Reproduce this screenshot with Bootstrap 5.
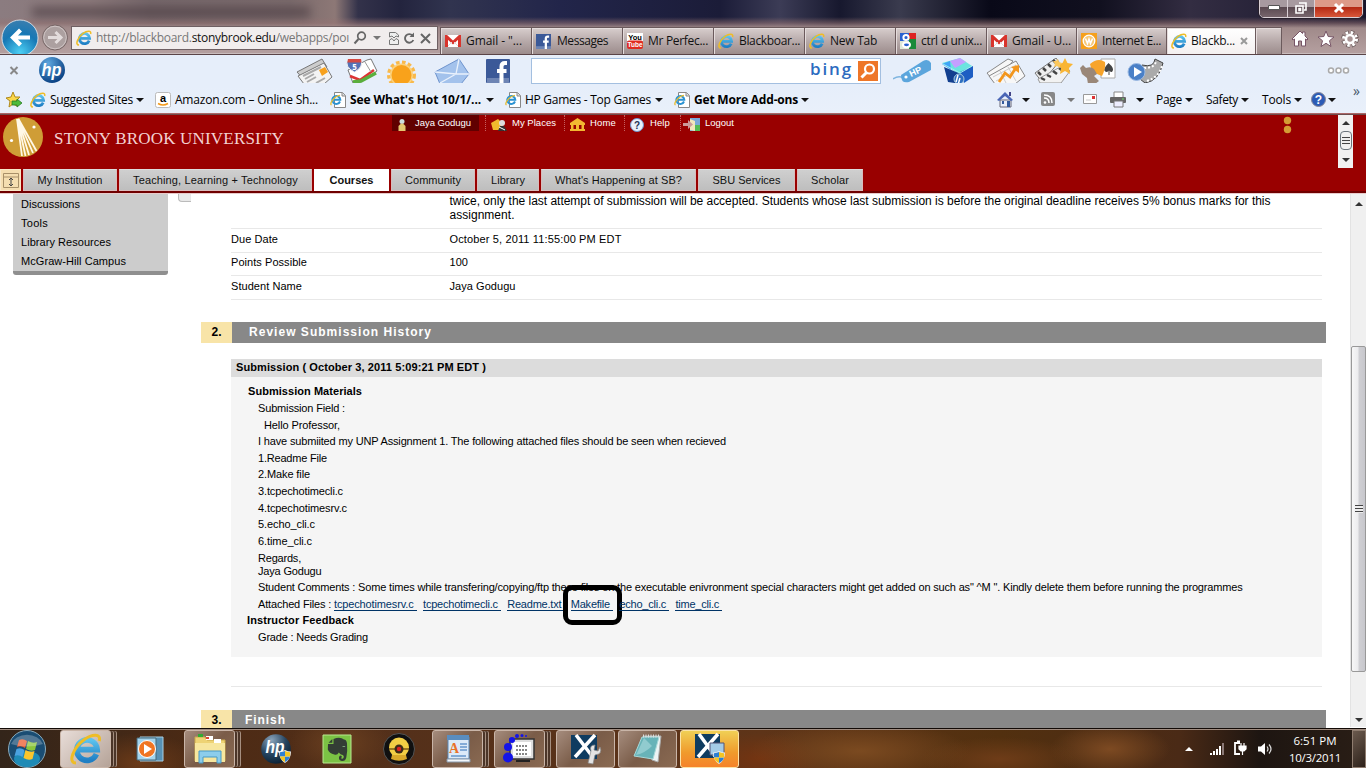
<!DOCTYPE html>
<html lang="en">
<head>
<meta charset="utf-8">
<title>Blackboard - Review Submission History</title>
<link href="https://cdn.jsdelivr.net/npm/bootstrap@5.3.0/dist/css/bootstrap.min.css" rel="stylesheet">
<style>
html,body{height:768px;overflow:hidden}
body{width:1366px;font:11px/1.2 "Liberation Sans",Arial,sans-serif;color:#000;background:#fff}
svg{display:block;overflow:visible}
.cells{display:grid;align-items:center;justify-items:start}
.ui{font-family:"Open Sans","Noto Sans",sans-serif;font-size:12px;white-space:nowrap;line-height:16px}
[data-w]{display:inline-block;white-space:pre}
/* window frame */
.frame{height:55px;position:relative;border-bottom:1px solid #5a4447;box-shadow:inset 0 -1px #c9bcbc;overflow:hidden;
 background:linear-gradient(180deg,transparent 17px,rgba(150,115,115,.55) 23px,#a08a8a 28px,#b5a0a0 54px),
 linear-gradient(90deg,#8b7c80 0,#8a787a 90px,#75666a 150px,#7a6a6c 290px,#8d7876 335px,#33324a 358px,#23243e 400px,#31344f 450px,#22254a 560px,#1b1c38 720px,#3c3c56 780px,#17182e 840px,#3a3b4e 900px,#090918 990px,#11101f 1100px,#332d42 1190px,#17152c 1366px)}
.smudge{position:absolute;height:10px;top:7px;background:#4b3c41;filter:blur(5px);opacity:.65}
.caption{position:absolute;right:3px;top:-3px;width:104px;height:21px;border:1px solid #d9cfd5;border-radius:0 0 5px 5px;overflow:hidden;box-shadow:0 0 0 1px #28202c;grid-template-columns:28px 27px 1fr}
.caption>div{width:100%;height:100%;display:flex;align-items:center;justify-content:center;background:linear-gradient(#a79aa0 45%,#5b4a52 50%,#77656c);border-right:1px solid #d9cfd5}
.caption>.shut{background:linear-gradient(#dd9a88 45%,#b52a14 50%,#d8573a);border:0}
.strip{height:54px;grid-template-columns:40px 31px 366px 3px 91px 91px 91px 91px 91px 91px 90px 90px 89px 27px 10px 26px 24px 20px;align-items:end;position:relative}
.addr{width:367px;height:24px;margin-bottom:4px;border:1px solid #6f6063;background:#f1eded;grid-template-columns:4px 20px 257px 20px 13px 17px 17px 1fr;color:#777}
.addr b{font-weight:400;color:#111}
.tabx{width:100%;height:27px;border:1px solid #6b5a5c;border-right:0;border-bottom:0;background:linear-gradient(#d8cecd,#b7aaaa 50%,#9c8c8c);grid-template-columns:4px 21px 1fr;box-shadow:inset 1px 1px #e5dcdc;color:#111}
.tabx.on{background:linear-gradient(#fff,#f4f0f0);grid-template-columns:4px 20px 49px 1fr}
/* toolbars */
.bar1{height:31px;background:#e6eefa;grid-template-columns:9px 29px 258px 49px 42px 47px 51px 46px 362px 47px 46px 48px 46px 47px 200px 1fr}
.bar1>svg{height:25px;align-self:start;margin-top:3px;overflow:hidden}
.find{width:350px;height:26px;background:#fff;border:1px solid #a3bfe0;display:flex;align-items:center;justify-content:flex-end;gap:5px;padding-right:2px}
.bing{font:600 17px/20px "Open Sans",sans-serif;color:#2c6bbf;margin-top:-3px}
.bar2{height:28px;background:linear-gradient(#e6eefa,#e9f0fa);border-bottom:1px solid #a66;grid-template-columns:6px 24px 20px 86px 19px 20px 155px 20px 136px 19px 20px 130px 19px 20px 107px 196px 25px 19px 26px 16px 27px 26px 20px 29px 21px 35px 21px 32px 17px 17px 25px 1fr}
.dn{width:0;height:0;border:4px solid transparent;border-top:4px solid #111;border-bottom:0}
.dn.dim{border-top-color:#777}
/* university banner */
.banner{height:80px;background:#900;border-top:1px solid #6e4c4c;border-bottom:1px solid #e8caca}
.top{height:54px;grid-template-columns:3px 51px 338px 87px 6px 79px 60px 56px 604px 55px 1fr;color:#fff;font-size:9.5px;align-items:start}
.top .lnk{display:flex;height:16px;line-height:15px;width:100%}
.top .lnk svg{margin:3px 0 0 5px}
.me{background:#610000}
.sep{border-left:1px dotted #c56060}
.uni{font:17px/20px "Liberation Serif",serif;color:#f3d2d2;margin-top:14px}
.mini{width:15px;height:53px;background:#f1f1f1}
.tabs{height:24px;border-bottom:2px solid #700000;grid-template-columns:21px 94px 193px 75px 84px 62px 155px 97px 66px;column-gap:2px}
.tabs>div{height:22px;width:100%;background:linear-gradient(#cfcfcf,#bebebe);border:1px solid #d9bcbc;border-top-color:#ddd;text-align:center;line-height:20px;color:#111}
.tabs>div.cur{background:#fff;font-weight:700;border-color:#fff;line-height:21px}
.tabs>div.tog{background:#f5deb0;border-color:#f8e8c8}
/* page body */
.view{height:534px;overflow:hidden;grid-template-columns:13px 155px 10px 23px 1125px 24px 16px;align-items:start}
.side{width:155px;height:81px;background:#ccc;border-bottom:4px solid #8f8f8f;border-radius:0 0 3px 3px;padding:1px 8px 0;line-height:19px}
.nub{width:13px;height:8px;border:1px solid #bbb;border-width:0 0 1px 1px;border-radius:0 0 0 4px;background:#e8e8e8}
.rowx{margin-left:30px;width:1091px;border-bottom:1px solid #e8e8e8;display:grid;grid-template-columns:218.5px 1fr}
.rowx.first{height:35px;line-height:14px;font-size:12px}
.sect{height:21px;width:1125px;display:flex;font:bold 12px/20px "Liberation Sans",sans-serif;background:#888;color:#fff}
.sect .num{width:31px;background:#f8e4a8;color:#000;text-align:center}
.panel{margin-left:30px;width:1091px;height:298px;background:#f5f5f5;line-height:16.66px}
.panel .hd{height:18px;line-height:17px;background:#dcdcdc;padding-left:5px;margin-bottom:6.2px}
.panel .ln{height:16.66px;padding-left:27px;white-space:nowrap}
.panel a{color:#003366;position:relative;text-decoration:none;border-bottom:1px solid #003366;line-height:11px;margin-right:6.6px}
.ring{position:absolute;left:-8px;top:-14px;width:59px;height:40px;border:5px solid #000;border-radius:9px}
.sbar{width:16px;height:533px;background:#f0f0f0;border-left:1px solid #e3e3e3;display:flex;flex-direction:column;align-items:center}
.thumb{width:15px;height:326px;margin-top:140px;border:1px solid #999;border-radius:2px;background:linear-gradient(90deg,#f7f7f7,#ececee 45%,#cfcfd3 55%,#c7c7cc);display:flex;align-items:center;justify-content:center}
.ar{width:0;height:0;border:4px solid transparent}
.ar.u{border-top:0;border-bottom:4px solid #333}.ar.d{border-bottom:0;border-top:4px solid #333}
.grip{width:8px;height:8px;background:repeating-linear-gradient(#444 0 1px,#eee 1px 3px)}
/* taskbar */
.task{height:40px;border-top:1px solid #120a06;box-shadow:inset 0 1px #a08c80;grid-template-columns:60px 60px 63px 63px 61px 62px 63px 62px 62px 62px 62px 62px 443px 25px 27px 26px 21px 68px 1fr;
 background:radial-gradient(ellipse 60px 30px at 140px 34px,#6b3a18,transparent),radial-gradient(ellipse 50px 30px at 340px 14px,#6b4020,transparent),radial-gradient(ellipse 110px 30px at 860px 22px,#7b4a20,transparent),radial-gradient(ellipse 80px 22px at 1000px 30px,#6e3c18,transparent),radial-gradient(ellipse 60px 26px at 1110px 20px,#7d4a22,transparent),radial-gradient(ellipse 60px 26px at 760px 30px,#743411,transparent),linear-gradient(90deg,#33251a,#4c2a14 200px,#54301a 400px,#5e3418 760px,#52300f 1000px,#4a2a16 1180px,#1d1511 1260px,#2a1e16)}
.tb{height:38px;display:flex;align-items:center;justify-content:center;border:1px solid #c9b5a8;border-radius:3px;background:linear-gradient(135deg,#a58c7d,#7a5c48 50%,#8a6a52);width:51px;margin-top:1px}
.tb.wide{width:59px}
.tb.lit{background:linear-gradient(135deg,#e8ddd8,#b5a398)}
.tb.hot{background:linear-gradient(#f0cf55,#f09a2c 60%,#f5832a);border-color:#fbe3a8}
.stack3{box-shadow:3px 0 0 -1px #4b3528,4px 0 0 -1px #a58f80,6px 0 0 -1px #4b3528,7px 0 0 -1px #a58f80}
.noframe{border-color:transparent;background:none}
.clock{color:#fff;text-align:center;font-size:11.5px;line-height:17px;width:62px}
.peek{width:14px;height:38px;border:1px solid #8f7d70;background:linear-gradient(135deg,#6b5a4e,#2d211a);margin-top:1px}
</style>
</head>
<body>
<svg width="0" height="0" class="position-absolute">
<defs>
<radialGradient id="gb" cx=".5" cy=".9" r=".9"><stop offset="0" stop-color="#4cd0f5"/><stop offset=".6" stop-color="#1778b5"/><stop offset="1" stop-color="#3b7eae"/></radialGradient>
<linearGradient id="gi" x2="0" y2="1"><stop offset="0" stop-color="#5cc3ee"/><stop offset="1" stop-color="#1f7fc4"/></linearGradient>
<radialGradient id="gh" cx=".35" cy=".25" r=".8"><stop offset="0" stop-color="#5fa8df"/><stop offset="1" stop-color="#063d80"/></radialGradient>
<radialGradient id="gd" cx=".35" cy=".2" r=".8"><stop offset="0" stop-color="#8aa4bb"/><stop offset=".6" stop-color="#26445f"/><stop offset="1" stop-color="#0d2438"/></radialGradient>
<symbol id="ie" viewBox="0 0 16 16"><path d="M13.2 10.6A5.1 5.1 0 1 1 13.6 8.3H4.2" fill="none" stroke="url(#gi)" stroke-width="2.8"/><path d="M3 15C-1.5 15 2 7 7 3.4 11 .5 15.700.1 14.6 4" fill="none" stroke="#eebd26" stroke-width="1.5"/></symbol>
<symbol id="iep" viewBox="0 0 16 16"><path d="M4.500.5h8l3 3v12h-11z" fill="#fff" stroke="#888"/><path d="M12 .5v3.500h3.500" fill="#ddd" stroke="#888"/><path d="M10 9.500A4 4 0 1 1 10.300 7.800H3" fill="none" stroke="#2a92d2" stroke-width="2"/><path d="M1.500 13C-1 12 4 4 10 3.300" fill="none" stroke="#e8bc30" stroke-width="1.300"/></symbol>
<symbol id="gm" viewBox="0 0 16 12"><path d="M0 0h16v12H0z" fill="#fff"/><path d="M1.500 12V1.500L8 7.500 14.500 1.500V12" fill="none" stroke="#d8342c" stroke-width="3"/><path d="M3 11l4-4M13 11L9 7" stroke="#ddd"/></symbol>
<symbol id="fb" viewBox="0 0 16 16"><path d="M0 0h16v16H0z" fill="#3b5998"/><path d="M0 13h16v3H0z" fill="#6d84b4"/><path d="M14 2.800h-1.500c-1.500 0-2 .7-2 2V16M7.500 8h6" fill="none" stroke="#fff" stroke-width="2.400"/></symbol>
<symbol id="sh" viewBox="0 0 12 13"><path d="M6 0q3 1.500 6 1.500 0 8-6 11.500-6-3.500-6-11.500Q3 1.500 6 0" fill="#eee"/><path d="M6 1v5.500H1Q.8 4 1 2.300 4 2 6 1M6 6.500h5Q10 10.300 6 12z" fill="#2d7fd3"/><path d="M6 1q2 1 5 1.300.2 2 0 4.200H6zM1 6.500h5V12Q2 10.300 1 6.500" fill="#f4c522"/></symbol>
</defs>
</svg>

<header class="frame">
  <div class="smudge" style="left:32px;width:278px"></div>
  <div class="caption cells">
    <div><svg width="12" height="5"><path d="M.5.5h11v4H.5z" fill="#fff" stroke="#555"/></svg></div>
    <div><svg width="12" height="12"><path d="M4 1h7v7H9M1 4h7v7H1zM4 6.500v2h1.500v-2z" fill="none" stroke="#fff" stroke-width="1.600"/></svg></div>
    <div class="shut"><svg width="12" height="10"><path d="M2 1l8 8M10 1L2 9" stroke="#fff" stroke-width="3"/></svg></div>
  </div>
  <nav class="strip cells ui">
    <svg width="40" height="36" viewBox="0 0 40 36"><circle cx="20" cy="20" r="18" fill="url(#gb)" stroke="#fff" stroke-opacity=".7"/><path d="M20.500 12l-7.500 7.500 7.500 7.500M14 19.500h16" fill="none" stroke="#fff" stroke-width="4.200"/></svg>
    <svg width="30" height="30" viewBox="0 0 30 30"><circle cx="15" cy="13.500" r="12.500" fill="#aca0a0" stroke="#766"/><circle cx="15" cy="13.500" r="11.300" fill="none" stroke="#cfc4c4"/><path d="M15.500 8l5.500 5.500-5.500 5.500M20 13.500H8" fill="none" stroke="#e3dcdc" stroke-width="3"/></svg>
    <div class="addr cells">
      <i></i><svg width="16" height="16"><use href="#ie"/></svg>
      <span data-w="253">http://blackboard.<b>stonybrook.edu</b>/webapps/poı</span>
      <svg width="14" height="14" viewBox="0 0 14 14"><circle cx="8.500" cy="5" r="3.800" fill="none" stroke="#666" stroke-width="1.700"/><path d="M5.500 8L1.500 12.500" stroke="#666" stroke-width="2"/></svg>
      <i class="dn dim"></i>
      <svg width="10" height="13" viewBox="0 0 10 13" style="margin-left:3px"><path d="M.5 5V.5h6L9.500 3v2L7 4 5 6 3 4zM.5 8L3 6.500 5 9l2-2.500L9.500 8v4.500h-9z" fill="#eee" stroke="#777"/></svg>
      <svg width="12" height="13" viewBox="0 0 12 13"><path d="M9.500 3.500A4.300 4.300 0 1 0 10.300 8" fill="none" stroke="#666" stroke-width="1.900"/><path d="M6.500 5h4.500V.5z" fill="#666"/></svg>
      <svg width="11" height="11"><path d="M1 1l9 9M10 1l-9 9" stroke="#666" stroke-width="2"/></svg>
    </div>
    <i></i>
    <div class="tabx cells"><i></i><svg width="16" height="12"><use href="#gm"/></svg><span data-w="56">Gmail - "...</span></div>
    <div class="tabx cells"><i></i><svg width="15" height="15"><use href="#fb"/></svg><span data-w="51">Messages</span></div>
    <div class="tabx cells"><i></i><svg width="16" height="16" viewBox="0 0 16 16"><path d="M0 0h16v8H0z" fill="#fff"/><rect y="7.500" width="16" height="8.500" rx="2" fill="#e02b20"/><text x="8" y="6.500" font-family="Liberation Sans" font-weight="700" font-size="7.500" text-anchor="middle">You</text><text x="8" y="14.200" font-family="Liberation Sans" font-weight="700" font-size="6.500" text-anchor="middle" fill="#fff">Tube</text></svg><span data-w="60">Mr Perfec...</span></div>
    <div class="tabx cells"><i></i><svg width="16" height="16"><use href="#ie"/></svg><span data-w="61">Blackboar...</span></div>
    <div class="tabx cells"><i></i><svg width="16" height="16"><use href="#ie"/></svg><span data-w="47">New Tab</span></div>
    <div class="tabx cells"><i></i><svg width="16" height="16" viewBox="0 0 16 16"><path d="M0 0h9v8H0z" fill="#2760d0"/><path d="M9 0h7v6H9z" fill="#d22"/><path d="M9 6h7v10H9z" fill="#1a8a3a"/><path d="M0 8h9v8H0z" fill="#dfe8d8"/><circle cx="6" cy="4.500" r="2.600" fill="#2760d0" stroke="#fff" stroke-width="2"/><ellipse cx="6.500" cy="11.800" rx="3.500" ry="2.400" fill="#2760d0" stroke="#fff" stroke-width="2"/></svg><span data-w="61">ctrl d unix...</span></div>
    <div class="tabx cells"><i></i><svg width="16" height="12"><use href="#gm"/></svg><span data-w="59">Gmail - U...</span></div>
    <div class="tabx cells"><i></i><svg width="16" height="16"><path d="M0 0h16v16H0z" fill="#f5a01c"/><circle cx="8" cy="8" r="5.800" fill="#f7c878" stroke="#fff" stroke-width="1.300"/><path d="M4.500 5.500l2 5L8 6l1.500 4.500 2-5" fill="none" stroke="#fff" stroke-width="1.500"/></svg><span data-w="59">Internet E...</span></div>
    <div class="tabx on cells"><i></i><svg width="16" height="16"><use href="#ie"/></svg><span data-w="44">Blackb...</span><svg width="9" height="9"><path d="M1 1l6 6M7 1L1 7" stroke="#999" stroke-width="2"/></svg></div>
    <div class="tabx" style="border-right:1px solid #6b5a5c"></div>
    <i></i>
    <svg width="16" height="24" viewBox="0 -1 16 24"><path d="M0 8L8 0l2.500 2.500V1h2.500v4l3 3-1 1-1.500-1V15h-4v-5h-3v5h-4V8L1 9z" fill="#fff" stroke="#756"/></svg>
    <svg width="16" height="24" viewBox="0 -1 16 24"><path d="M8 0l2.200 5.500 5.800.5-4.500 3.700L13 15.500 8 12.300 3 15.500l1.500-5.800L0 6l5.800-.5z" fill="#fff" stroke="#756"/></svg>
    <svg width="16" height="24" viewBox="0 -1 16 24"><circle cx="8" cy="8" r="6.500" fill="none" stroke="#655" stroke-width="4.500" stroke-dasharray="3.100 2"/><circle cx="8" cy="8" r="6.500" fill="none" stroke="#fff" stroke-width="3" stroke-dasharray="2.500 2.600"/><circle cx="8" cy="8" r="4" fill="none" stroke="#fff" stroke-width="2.600"/></svg>
  </nav>
</header>

<div class="bar1 cells ui">
  <i></i><svg width="11" height="14" viewBox="0 0 11 14" style="height:14px;margin-top:9px"><path d="M1.500 3l7 7M8.500 3l-7 7" stroke="#888" stroke-width="2"/></svg>
  <svg width="28" height="26" viewBox="0 0 28 26" style="height:26px;margin-top:2px"><circle cx="14" cy="13" r="13" fill="url(#gh)"/><text x="13.500" y="18.500" font-family="Liberation Sans" font-weight="700" font-style="italic" font-size="19" fill="#fff" text-anchor="middle" textLength="20" lengthAdjust="spacingAndGlyphs">hp</text></svg>
  <svg width="38" height="25" viewBox="0 0 38 25"><g stroke="#777"><path d="M1 14L26 1l5 8-20 16z" fill="#ccc"/><path d="M2 18L28 5l8 14-8 7H8z" fill="#f3f3f3"/><path d="M7 18l18-9M9 21l9-5M11 24l9-5M20 25l9-5" stroke="#aaa" stroke-width="2"/></g><path d="M23 12l6-3 3 5-6 4z" fill="#f7a11c"/></svg>
  <svg width="34" height="25" viewBox="0 0 34 25"><path d="M3 12L22 2l4-1 6 12-18 12H8z" fill="#fff" stroke="#777"/><path d="M5 18l10 4 14-10" fill="none" stroke="#d33" stroke-width="2.500"/><path d="M8 24l8-1 15-8" stroke="#5aae3c" stroke-width="3.500" fill="none"/><path d="M20 4l6 10" stroke="#999"/><path d="M3 1h13q3 8-6.500 13Q-1 9 3 1" fill="#5571b5" stroke="#eee"/><path d="M3 1h13l.5 3.500H2.300z" fill="#d44a44"/><text x="9.500" y="11.500" font-size="8" font-weight="700" fill="#fff" text-anchor="middle">5</text></svg>
  <svg width="32" height="25" viewBox="0 0 32 25"><circle cx="14.500" cy="17" r="12.500" fill="none" stroke="#f9b94a" stroke-width="4" stroke-dasharray="3.500 2.400"/><circle cx="14.500" cy="17" r="11.500" fill="#fbd17c"/><circle cx="14.500" cy="17" r="10" fill="#f9a21b"/></svg>
  <svg width="36" height="25" viewBox="0 0 36 25"><path d="M1 14L25 1l10 15-8 10H6z" fill="#a3c2ec" stroke="#6e93cd"/><path d="M1 14l21 2 3-15M22 16l13 0M22 16L6 25" fill="none" stroke="#e9f1fc" stroke-width="1.300"/></svg>
  <svg width="26" height="25" viewBox="0 0 26 25"><rect x="1" y="1" width="24" height="24" rx="1" fill="#3b5998"/><path d="M2 20h22v5H2z" fill="#6d84b4"/><path d="M22 5h-2q-3.500 0-3.500 3.500V25M12 13h9.500" fill="none" stroke="#fff" stroke-width="4"/></svg>
  <div class="find"><span class="bing" data-w="43">bing</span><svg width="20" height="20"><path d="M0 0h20v20H0z" fill="#ee7628"/><circle cx="11.500" cy="8" r="4.500" fill="none" stroke="#fff" stroke-width="2.200"/><path d="M8.500 11.500L3.500 16.500" stroke="#fff" stroke-width="3"/></svg></div>
  <svg width="40" height="25" viewBox="0 0 40 25"><path d="M0 21q6-4 10-1" fill="none" stroke="#7fb5df" stroke-width="1.500"/><path d="M8 17L30 3q5-3 8 2v7L16 24q-8 2-8-7" fill="#5ba5dc"/><circle cx="13" cy="19" r="1.600" fill="#fff"/><text x="18" y="19" font-family="Liberation Sans" font-weight="700" font-size="9" fill="#fff" transform="rotate(-25 18 19)">HP</text></svg>
  <svg width="36" height="25" viewBox="0 0 36 25"><path d="M2 5L20 0l12 8-12 9z" fill="#6ce4df"/><path d="M10 3l10-3 6 4-11 6z" fill="#c5a0ff"/><path d="M10 3L2 6l9 6z" fill="#40a4f6"/><path d="M20 14l13-6v11l-9 6z" fill="#1d5ec3"/><path d="M4 9l17 7v10L8 24z" fill="#123f8f"/><path d="M3 6l17 9 12-7" fill="none" stroke="#9ff0f0"/><circle cx="19" cy="21" r="5" fill="#2f6fc0" stroke="#acd"/><path d="M18 17l-2 7M20 20l-2 7" stroke="#fff" stroke-width="1.500"/></svg>
  <svg width="40" height="25" viewBox="0 0 40 25"><g fill="#f7f7f7" stroke="#888"><path d="M1 15L22 1l5 2-18 22z"/><path d="M3 18L30 3l9 15-10 8H9z"/></g><path d="M7 19L30 7M10 23L33 11M14 13l6 12M22 9l8 14" stroke="#ccc"/><path d="M13 24l6-9 5 4 7-11" fill="none" stroke="#f3961c" stroke-width="2.800"/><path d="M25 9l8-2v8z" fill="#f3961c"/></svg>
  <svg width="40" height="25" viewBox="0 0 40 25"><path d="M1 15L22 0l3 4L8 24z" fill="#eee" stroke="#777"/><path d="M4 14l3 3M9 10l3 3M14 6l3 3M19 2l3 3" stroke="#444" stroke-width="2.500"/><path d="M4 21L30 7l6 6-9 12H6z" fill="#f2f2f2" stroke="#999"/><path d="M7 20l4 2M13 17l4 2M19 13l4 3M25 10l4 3" stroke="#444" stroke-width="2.500"/><path d="M31 0l2.500 5 5.500 1-4 4 1 6-5-3-5 3 1-6-4-4 5.500-1z" fill="#f9b534"/><path d="M24 1l1 3 3 1-2 2v3l-3-2-3 1 1-3-2-3h3z" fill="#fbc75c"/></svg>
  <svg width="38" height="25" viewBox="0 0 38 25"><path d="M21 1h14v19H21z" fill="#fff" stroke="#aaa"/><path d="M28.500 5q-7 7-2.500 9 2 0 2.500-1.500v4.500h1v-4.500Q30 14 32 14q3.500-3-3.500-9" fill="#444"/><path d="M10 6Q18-1 25 4q1 6-3 14L12 14z" fill="#f7a42b"/><path d="M0 10l3-3 3 3q5-2 8 1l3 5-3 2 5 5-4 3H8l-1-6-5-4z" fill="#9a8778"/></svg>
  <svg width="38" height="25" viewBox="0 0 38 25"><path d="M15 7q12 3 13-6l8 4q-4 18-18 20l-5-4z" fill="#aaa" stroke="#444"/><path d="M17 10q11 0 12-7M20 23q12-4 15-15" fill="none" stroke="#fff" stroke-width="2" stroke-dasharray="2 2"/><circle cx="9.500" cy="14" r="8.500" fill="#4a80c7" stroke="#9bb9e2"/><path d="M7 9v10l8-5z" fill="#fff"/></svg>
  <svg width="24" height="25" viewBox="0 0 24 25"><g fill="#fff" stroke="#aaa" stroke-width="1.500"><circle cx="4" cy="12.500" r="2.500"/><circle cx="11.500" cy="12.500" r="2.500"/><circle cx="19" cy="12.500" r="2.500"/></g></svg>
</div>

<div class="bar2 cells ui">
  <i></i>
  <svg width="16" height="16" viewBox="0 0 16 16"><path d="M7 0l2 5h5l-4 4 1 5-4-2-4 3 1-6-4-3 5-1z" fill="#fbd749" stroke="#b08a1c"/><path d="M6 9h5V7l5 4-5 4v-2H6z" fill="#4dbb3b" stroke="#2a7a25" stroke-width=".8"/></svg>
  <svg width="16" height="16"><use href="#ie"/></svg><span data-w="83">Suggested Sites</span><i class="dn"></i>
  <svg width="16" height="16"><rect x=".5" y=".5" width="15" height="15" rx="2" fill="#fff" stroke="#bbb"/><text x="8" y="10" font-family="Liberation Sans" font-weight="700" font-size="11" text-anchor="middle">a</text><path d="M3 11.500q5 3 10 0" fill="none" stroke="#f29a1c" stroke-width="1.500"/></svg><span data-w="143">Amazon.com – Online Sh...</span>
  <svg width="16" height="16"><use href="#iep"/></svg><span class="fw-bold" data-w="131">See What's Hot 10/1/...</span><i class="dn"></i>
  <svg width="16" height="16"><use href="#iep"/></svg><span data-w="126">HP Games - Top Games</span><i class="dn"></i>
  <svg width="16" height="16"><use href="#iep"/></svg><span class="fw-bold" data-w="104">Get More Add-ons</span><i class="dn"></i>
  <svg width="17" height="16" viewBox="0 0 17 16"><path d="M3 8h11v7H3z" fill="#e9eef8" stroke="#667"/><path d="M0 8L8 0l8 8-2 1-6-5-6 5z" fill="#4a66b5"/><path d="M12 0h2v4h-2z" fill="#448"/><path d="M5 9h2v3H5zM10 9h3v6h-3z" fill="#345a9b"/></svg><i class="dn"></i>
  <svg width="15" height="15"><rect width="14" height="14" rx="2" fill="#888"/><path d="M3 3q8 0 8 8M3 6q5 0 5 5" fill="none" stroke="#fff" stroke-width="1.500"/><circle cx="4" cy="10.500" r="1.300" fill="#fff"/></svg><i class="dn dim"></i>
  <svg width="14" height="11"><path d="M.5.5h13v9H.5z" fill="#fdfdfd" stroke="#999"/><path d="M9 2h3v3H9z" fill="#d33"/><path d="M3 6h5" stroke="#ccc"/></svg>
  <svg width="17" height="15"><path d="M4 0h9v6H4z" fill="#fff" stroke="#888"/><rect x="0" y="5" width="16" height="6" rx="1" fill="#666"/><path d="M4 9h9v6H4z" fill="#eef" stroke="#777"/><path d="M12 7h2" stroke="#6d6"/></svg><i class="dn"></i>
  <span data-w="26">Page</span><i class="dn"></i><span data-w="32">Safety</span><i class="dn"></i><span data-w="29">Tools</span><i class="dn"></i>
  <svg width="15" height="15"><circle cx="7.500" cy="7.500" r="7" fill="#2c5bb5" stroke="#889"/><text x="7.500" y="12" font-family="Liberation Sans" font-weight="700" font-size="12" fill="#fff" text-anchor="middle">?</text></svg><i class="dn"></i>
  <span style="color:#456;margin-top:-18px;font-size:14px">»</span>
</div>

<div class="banner">
  <div class="top cells">
    <i></i>
    <svg width="40" height="40" viewBox="0 0 40 40" style="margin-top:2px"><circle cx="20" cy="20" r="20" fill="#cf9d36"/><path d="M14 2l5 37M14.500 2l8 37M15 2l11 36M15 2l15 34M15.500 2l18 32" stroke="#fff8e6" stroke-width="1.800"/><circle cx="31" cy="10" r="1.600" fill="#fff"/><circle cx="8.500" cy="23.500" r="1.600" fill="#fff"/></svg>
    <span class="uni" data-w="230">STONY BROOK UNIVERSITY</span>
    <div class="lnk me"><svg width="10" height="13"><circle cx="5" cy="3.500" r="2.500" fill="#cdd"/><path d="M1.500 13V8Q5 3 8.500 8v5z" fill="#e5c770"/></svg><span class="ms-2" data-w="56">Jaya Godugu</span></div>
    <i></i>
    <div class="lnk sep"><svg width="16" height="13"><path d="M0 5l7-4 4 4v7H2z" fill="#f0b92d"/><circle cx="11" cy="5" r="3" fill="#ddd"/><path d="M7 13l2-5h4l3 5z" fill="#333"/><path d="M8 9l6 3" stroke="#fff"/></svg><span style="margin-left:5px" data-w="44">My Places</span></div>
    <div class="lnk sep"><svg width="15" height="13"><path d="M0 5l7.500-5L15 5v2H0zM1 7h2.500v4H1zM6 7h3v4H6zM11.500 7H14v4h-2.500zM0 11h15v2H0z" fill="#f2b831"/></svg><span style="margin-left:5px" data-w="26">Home</span></div>
    <div class="lnk sep"><svg width="14" height="14"><circle cx="7" cy="7" r="6.500" fill="#e9f1fb" stroke="#6e94cd"/><text x="7" y="11" font-weight="700" font-size="10" fill="#235" text-anchor="middle">?</text></svg><span style="margin-left:6px" data-w="20">Help</span></div>
    <div class="lnk sep"><svg width="17" height="13" style="margin-left:2px"><path d="M7 0h10v13H7z" fill="#7aa7d8"/><path d="M12 7h5v6h-5z" fill="#5b5"/><path d="M7 1l5 2v10l-5-1z" fill="#f3e6bb"/><path d="M0 5h5V2l5 4.500L5 11V8H0z" fill="#c99"/></svg><span style="margin-left:5px" data-w="29">Logout</span></div>
    <svg width="8" height="20"><circle cx="3.500" cy="5.500" r="3.700" fill="#d49c34"/><circle cx="3.500" cy="14.500" r="3.700" fill="#d49c34"/></svg>
    <div class="mini d-flex flex-column align-items-center" style="margin-left:-1px"><i class="ar u" style="margin-top:6px"></i><div class="d-flex align-items-center justify-content-center border border-secondary rounded-1" style="width:12px;height:19px;margin:6px 0 8px"><i class="grip"></i></div><i class="ar d"></i></div>
  </div>
  <nav class="tabs cells">
    <div class="tog"><svg width="16" height="15" style="margin:3px 0 0 2px"><path d="M.5.5h15v14H.5zM0 4h16" fill="none" stroke="#a89068"/><path d="M8 5v8M6 7l2-2 2 2M6 11l2 2 2-2" fill="none" stroke="#444"/></svg></div>
    <div><span data-w="65">My Institution</span></div><div><span data-w="165">Teaching, Learning + Technology</span></div><div class="cur"><span data-w="44">Courses</span></div><div><span data-w="56">Community</span></div><div><span data-w="34">Library</span></div><div><span data-w="127">What's Happening at SB?</span></div><div><span data-w="68">SBU Services</span></div><div><span data-w="38">Scholar</span></div>
  </nav>
</div>

<main class="view cells">
  <i></i>
  <nav class="side"><div data-w="59">Discussions</div><br><div data-w="27">Tools</div><br><div data-w="90">Library Resources</div><br><div data-w="105">McGraw-Hill Campus</div></nav>
  <i></i><div class="nub"></div>
  <section>
    <div class="rowx first"><i></i><div><span data-w="821">twice, only the last attempt of submission will be accepted. Students whose last submission is before the original deadline receives 5% bonus marks for this</span><br><span data-w="65">assignment.</span></div></div>
    <div class="rowx" style="height:24px;line-height:21px"><div><span data-w="47">Due Date</span></div><div><span data-w="172">October 5, 2011 11:55:00 PM EDT</span></div></div>
    <div class="rowx" style="height:23px;line-height:19px"><div><span data-w="76">Points Possible</span></div><div><span data-w="18.5">100</span></div></div>
    <div class="rowx" style="height:24px;line-height:21px"><div><span data-w="71">Student Name</span></div><div><span data-w="66">Jaya Godugu</span></div></div>
    <div class="sect" style="margin-top:22px"><div class="num">2.</div><span style="margin-left:17px" data-w="183">Review Submission History</span></div>
    <div class="panel" style="margin-top:16px">
      <div class="hd fw-bold"><span data-w="250">Submission ( October 3, 2011 5:09:21 PM EDT )</span></div>
      <div class="ln fw-bold" style="padding-left:17px"><span data-w="114">Submission Materials</span></div>
      <div class="ln"><span data-w="87">Submission Field :</span></div>
      <div class="ln" style="padding-left:33px"><span data-w="76">Hello Professor,</span></div>
      <div class="ln"><span data-w="468">I have submiited my UNP Assignment 1. The following attached files should be seen when recieved</span></div>
      <div class="ln"><span data-w="69">1.Readme File</span></div>
      <div class="ln"><span data-w="52">2.Make file</span></div>
      <div class="ln"><span data-w="85">3.tcpechotimecli.c</span></div>
      <div class="ln"><span data-w="89">4.tcpechotimesrv.c</span></div>
      <div class="ln"><span data-w="57">5.echo_cli.c</span></div>
      <div class="ln"><span data-w="54">6.time_cli.c</span></div>
      <div class="ln" style="height:15.1px"><span data-w="43">Regards,</span></div>
      <div class="ln" style="height:14.2px;line-height:12px"><span data-w="63.5">Jaya Godugu</span></div>
      <div class="ln"><span data-w="984.5">Student Comments : Some times while transfering/copying/ftp these files on the executable enivronment special characters might get added on such as" ^M ". Kindly delete them before running the programmes</span></div>
      <div class="ln d-flex"><span data-w="76">Attached Files : </span><div class="text-nowrap d-flex align-items-start" style="padding-top:3px"><a href="#" data-w="82.500">tcpechotimesrv.c </a><a href="#" data-w="77.500">tcpechotimecli.c </a><a href="#" data-w="57">Readme.txt </a><a href="#" data-w="42">Makefile <i class="ring"></i></a><a href="#" data-w="49.500">echo_cli.c </a><a href="#" data-w="46.500">time_cli.c </a></div></div>
      <div class="ln fw-bold" style="padding-left:16px"><span data-w="107">Instructor Feedback</span></div>
      <div class="ln"><span data-w="110">Grade : Needs Grading</span></div>
    </div>
    <div class="rowx" style="height:30px"></div>
    <div class="sect" style="margin-top:23px"><div class="num">3.</div><span style="margin-left:13px" data-w="41">Finish</span></div>
  </section>
  <i></i>
  <div class="sbar"><i class="ar u" style="margin-top:8px"></i><div class="thumb"><i class="grip"></i></div><i class="ar d" style="margin-top:46px"></i></div>
</main>

<footer class="task cells ui">
  <svg width="40" height="38" viewBox="0 0 40 38" style="margin-left:7px"><circle cx="20" cy="19" r="18.500" fill="#1a4d73" stroke="#8ab"/><ellipse cx="20" cy="29" rx="13" ry="8" fill="#22a5d3" opacity=".7"/><path d="M12 10q4-2 8 1l-2 7q-4-3-8-1z" fill="#ec5a2c"/><path d="M21 11q5 3 9 1l-2 8q-4 2-9-1z" fill="#8bc63c"/><path d="M9.500 19q4-2 8 1l-2 7q-4-3-8-1z" fill="#4ba2e0"/><path d="M18.500 20q5 3 9 1l-2 8q-4 2-9-1z" fill="#fbc52c"/><path d="M4 14a17 14 0 0 1 32 0q-16 5-32 0" fill="#fff" opacity=".25"/></svg>
  <div class="tb lit stack3"><svg width="32" height="32"><use href="#ie"/></svg></div>
  <div class="tb noframe wide"><svg width="28" height="26"><path d="M4 1h23v24H4z" fill="#5792b5" stroke="#a8cfe2"/><path d="M1 2h19v22H1z" fill="#a4d5ee" stroke="#467"/><circle cx="11" cy="13" r="8.500" fill="#f07522" stroke="#fff"/><path d="M8 8v10l8-5z" fill="#fff"/></svg></div>
  <div class="tb stack3" style="margin-left:1px"><svg width="32" height="30" viewBox="0 0 32 30"><path d="M1 3h10l2 3h18v21H1z" fill="#eed374" stroke="#c9a84d"/><path d="M4 0h5v3H4z" fill="#3a3"/><path d="M12 2h7v4h-7z" fill="#fff"/><path d="M12 3h3v2h-3z" fill="#d43"/><path d="M20 5h7v4h-7z" fill="#fff"/><path d="M1 9h30v19H1z" fill="#f7e69e"/><path d="M5 29V17h22v12h-4v-6H9v6z" fill="#8ccdec" stroke="#4799c5"/></svg></div>
  <div class="tb noframe wide"><svg width="30" height="32" viewBox="0 0 30 32"><circle cx="15" cy="16" r="14.800" fill="url(#gd)"/><text x="14" y="20" font-family="Liberation Sans" font-weight="700" font-style="italic" font-size="18" fill="#fff" text-anchor="middle" textLength="19" lengthAdjust="spacingAndGlyphs">hp</text><use href="#sh" x="18" y="17" width="12" height="13"/></svg></div>
  <div class="tb noframe wide"><svg width="30" height="30"><path d="M1 1h28v28H1z" fill="#7bc244" stroke="#b9e890"/><path d="M6 10h5.500V5Q18 2.500 22 5.500q2.500 0 3 4 .7 8-.7 14-1 4-4.500 3.500-3.300-.5-2.800-4l1-1.500 1.800.5-.5 2.500q2 1 2.500-1.500 0-2.500-3-2.500l-2-2q-1.500 3-4.500 2-5-1-6.500-5z" fill="#333d35"/><path d="M6.500 8.800L10.300 5v3.800z" fill="#333d35"/><path d="M20 13q2-2 3.500 0-2-.5-3.500 0" fill="#9c9"/></svg></div>
  <div class="tb noframe wide"><svg width="32" height="32"><circle cx="16" cy="16" r="15.500" fill="#101010" stroke="#555"/><circle cx="16" cy="14.500" r="10" fill="#f1ce45"/><path d="M9 22h14l1 4q-8 3.500-16 0z" fill="#d9a92a"/><path d="M6 16h20" stroke="#7a5a18" stroke-width="1.500"/><circle cx="16" cy="16" r="4.500" fill="#3d2b18"/><circle cx="16" cy="16" r="2.200" fill="#d22"/></svg></div>
  <div class="tb stack3"><svg width="26" height="30"><path d="M3 3h21v22H3z" fill="#dceaf8" stroke="#5b88b6"/><path d="M2 1h22v5H2z" fill="#5a8dbf"/><text x="4" y="19" font-family="Liberation Serif" font-weight="700" font-size="14" fill="#e8722a">A</text><path d="M15 10h7M15 13h7M15 16h7M6 22h15" stroke="#6597cc" stroke-width="1.500"/><path d="M2 25h23v3H2z" fill="#f2f6fb" stroke="#89a"/></svg></div>
  <div class="tb stack3"><svg width="32" height="32"><path d="M6 6h24v20H6z" fill="#ddd" stroke="#333" stroke-width="1.500"/><path d="M9 9h18v14H9z" fill="#fff"/><path d="M12 13h12M12 17h12M12 21h12" stroke="#111" stroke-dasharray="2 1"/><path d="M12 28h14" stroke="#222" stroke-width="2"/><g fill="#1414e8"><circle cx="4" cy="24.500" r="5"/><circle cx="4" cy="14" r="4"/><circle cx="8" cy="7" r="3"/><circle cx="13" cy="3" r="2"/><circle cx="18" cy="2.500" r="1.500"/><circle cx="22" cy="3" r="1"/></g></svg></div>
  <div class="tb wide"><svg width="30" height="32"><path d="M0 2h26v24H0z" fill="#0f3c60"/><path d="M5 2l16 21M24 2L4 24" stroke="#fff" stroke-width="3.500"/><path d="M17 30l3-12q-2-6 4-6l-1 5 4 1 2-4q3 7-5 8l-2 9z" fill="#e4e4e4" stroke="#888" stroke-width=".7"/></svg></div>
  <div class="tb wide"><svg width="30" height="30"><path d="M11 2h17l-3 26-6-2z" fill="#eef4f4" stroke="#aaa"/><path d="M9 3h17l-6 22-19-3z" fill="#68b3b8" stroke="#a8d8d8"/><path d="M11 4L3 21q9-2 16-9z" fill="#a3d6d8" opacity=".7"/><path d="M10 2h17" stroke="#ddd" stroke-width="3" stroke-dasharray="1 1.500"/></svg></div>
  <div class="tb wide hot"><svg width="32" height="32"><path d="M1 1h25v24H1z" fill="#0f3c60"/><path d="M5 1l16 22M24 1L4 24" stroke="#fff" stroke-width="3.500"/><path d="M16 10h14v12H16z" fill="#a4cbe6" stroke="#557"/><use href="#sh" x="19" y="18" width="12" height="13"/></svg></div>
  <i></i>
  <i class="ar u" style="border-bottom-color:#fff"></i>
  <svg width="14" height="13"><path d="M1 13v-2M4 13V9M7 13V7M10 13V4" stroke="#fff" stroke-width="2"/><path d="M13 13V1" stroke="#a99" stroke-width="1.500"/></svg>
  <svg width="14" height="15" style="margin-left:-4px"><path d="M7 2H2v11h5M4 .5h3" fill="none" stroke="#fff" stroke-width="1.800"/><path d="M6 5h7v3l-2 2H8L6 8zM8 5V2M11 5V2M9.500 10v4" fill="#fff" stroke="#fff" stroke-width="1.200"/></svg>
  <svg width="14" height="14" style="margin-left:-5px"><path d="M0 4.500h3L7 1v12L3 9.500H0z" fill="#fff"/><path d="M9 4.500q2 2.500 0 5M11 2.500q4 4.500 0 9" fill="none" stroke="#ddd" stroke-width="1.200"/></svg>
  <div class="clock"><span data-w="43">6:51 PM</span><br><span data-w="52">10/3/2011</span></div>
  <div class="peek" style="margin-left:auto"></div>
</footer>

<script src="https://cdn.jsdelivr.net/npm/bootstrap@5.3.0/dist/js/bootstrap.bundle.min.js"></script>
<script>
// Track each label out to the width given in its data-w attribute.
document.querySelectorAll('[data-w]').forEach(function (el) {
  var n = el.textContent.length, w = parseFloat(el.dataset.w);
  el.style.letterSpacing = '0px';
  el.style.letterSpacing = ((w - el.getBoundingClientRect().width) / n) + 'px';
});
</script>
</body>
</html>
